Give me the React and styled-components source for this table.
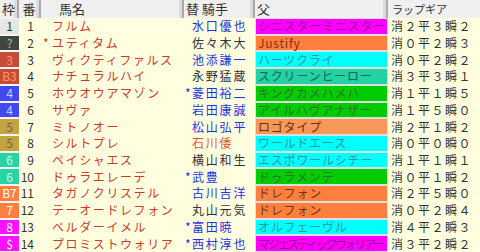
import React from 'react';
import styled, { createGlobalStyle } from 'styled-components';

const GlobalStyle = createGlobalStyle`
  html, body {
    margin: 0;
    padding: 0;
    background: #ffffe0;
  }
  body {
    font-family: "Noto Sans CJK JP", "Noto Sans", sans-serif;
    line-height: 14px;
  }
`;

const WAKU = {
  1: { bg: '#e6e6e6', fg: '#333333' },
  2: { bg: '#3e473e', fg: '#b8b8b8' },
  3: { bg: '#c84a38', fg: '#ff9a60' },
  4: { bg: '#4048f0', fg: '#c8d0ff' },
  5: { bg: '#c4a442', fg: '#6a6050' },
  6: { bg: '#28d4a4', fg: '#d0fff0' },
  7: { bg: '#ff7f3f', fg: '#ffffff' },
  8: { bg: '#ff10ff', fg: '#ffffff' },
};

const SIRE = {
  magenta: { bg: '#ff00ff', fg: '#a000a0' },
  orange: { bg: '#ff7f3f', fg: '#7a3010' },
  salmon: { bg: '#f89858', fg: '#6a3010' },
  cyan: { bg: '#00ffff', fg: '#2a9a9a' },
  teal: { bg: '#22d2a2', fg: '#106a50' },
  green: { bg: '#00cc00', fg: '#2a7a2a' },
};

const JOCKEY = {
  blue: '#2233dd',
  black: '#333333',
  red: '#e0582a',
};

const horses = [
  { waku: 1, label: '1', no: 1, name: 'フルム', jockey: '水口優也', jc: 'blue', sire: 'シニスターミニスター', sc: 'magenta', gear: '消２平３瞬２' },
  { waku: 2, label: '?', no: 2, mark: true, name: 'ユティタム', jockey: '佐々木大', jc: 'black', sire: 'Justify', sc: 'orange', gear: '消０平２瞬３' },
  { waku: 3, label: '3', no: 3, name: 'ヴィクティファルス', jockey: '池添謙一', jc: 'blue', sire: 'ハーツクライ', sc: 'cyan', gear: '消０平２瞬２' },
  { waku: 3, label: 'B3', no: 4, name: 'ナチュラルハイ', jockey: '永野猛蔵', jc: 'black', sire: 'スクリーンヒーロー', sc: 'teal', gear: '消３平３瞬１' },
  { waku: 4, label: '4', no: 5, name: 'ホウオウアマゾン', jockey: '菱田裕二', jmark: true, jc: 'blue', sire: 'キングカメハメハ', sc: 'green', gear: '消１平１瞬５' },
  { waku: 4, label: '4', no: 6, name: 'サヴァ', jockey: '岩田康誠', jc: 'blue', sire: 'アイルハヴアナザー', sc: 'green', gear: '消１平５瞬０' },
  { waku: 5, label: '5', no: 7, name: 'ミトノオー', jockey: '松山弘平', jc: 'blue', sire: 'ロゴタイプ', sc: 'salmon', gear: '消２平１瞬２' },
  { waku: 5, label: '5', no: 8, name: 'シルトプレ', jockey: '石川倭', jc: 'red', sire: 'ワールドエース', sc: 'cyan', gear: '消０平０瞬０' },
  { waku: 6, label: '6', no: 9, name: 'ペイシャエス', jockey: '横山和生', jc: 'black', sire: 'エスポワールシチー', sc: 'cyan', gear: '消１平１瞬１' },
  { waku: 6, label: '6', no: 10, name: 'ドゥラエレーデ', jockey: '武豊', jmark: true, jc: 'blue', sire: 'ドゥラメンテ', sc: 'green', gear: '消０平１瞬２' },
  { waku: 7, label: 'B7', no: 11, name: 'タガノクリステル', jockey: '古川吉洋', jc: 'blue', sire: 'ドレフォン', sc: 'orange', gear: '消２平５瞬０' },
  { waku: 7, label: '7', no: 12, name: 'テーオードレフォン', jockey: '丸山元気', jc: 'black', sire: 'ドレフォン', sc: 'orange', gear: '消０平２瞬４' },
  { waku: 8, label: '8', no: 13, name: 'ベルダーイメル', jockey: '富田暁', jmark: true, jc: 'blue', sire: 'オルフェーヴル', sc: 'cyan', gear: '消４平２瞬３' },
  { waku: 8, label: '$', no: 14, name: 'プロミストウォリア', jockey: '西村淳也', jmark: true, jc: 'blue', sire: 'マジェスティックウォリアー', sc: 'magenta', gear: '消３平２瞬２', squeeze: true },
];

export default function App() {
  return (
    <>
      <GlobalStyle />
      <Table>
        <HeadCell align='center'>枠</HeadCell>
        <HeadCell align='center'>番</HeadCell>
        <HeadCell pad='18px'>馬名</HeadCell>
        <HeadCell pad='2px'>替 騎手</HeadCell>
        <HeadCell pad='2px'>父</HeadCell>
        <HeadCell pad='4px' small last>ラップギア</HeadCell>

        {horses.map(h => (
          <React.Fragment key={h.no}>
            <WakuCell>
              <WakuBox bg={WAKU[h.waku].bg} fg={WAKU[h.waku].fg}>{h.label}</WakuBox>
            </WakuCell>
            <NumCell>{h.no}</NumCell>
            <NameCell>
              <Mark w='9px' color='#c83c28'>{h.mark ? '*' : ''}</Mark>
              {h.name}
            </NameCell>
            <JockeyCell color={JOCKEY[h.jc]}>
              <Mark w='7px' color={JOCKEY.blue}>{h.jmark ? '*' : ''}</Mark>
              {h.jockey}
            </JockeyCell>
            <SireCell>
              <SireBox bg={SIRE[h.sc].bg} fg={SIRE[h.sc].fg} squeeze={h.squeeze}>
                {h.sire}
              </SireBox>
            </SireCell>
            <GearCell>{h.gear}</GearCell>
          </React.Fragment>
        ))}
      </Table>
    </>
  );
}

const Table = styled.div`
  display: grid;
  grid-template-columns: 19px 22px 143px 71px 133px 1fr;
  grid-template-rows: 18px repeat(14, minmax(0, 1fr));
  width: 480px;
  height: 252px;
  background: #ffffe0;
  overflow: hidden;
`;

const HeadCell = styled.div`
  display: flex;
  align-items: center;
  justify-content: ${({ align }) => (align === 'center' ? 'center' : 'flex-start')};
  padding-left: ${({ pad }) => pad || '0'};
  background: #f0f0f0;
  color: #333;
  font-size: ${({ small }) => (small ? '11px' : '13px')};
  white-space: nowrap;
  border-right: ${({ last }) => (last ? 'none' : '2px solid #a9a9a9')};
  box-shadow: ${({ last }) => (last ? 'none' : 'inset -3px 0 0 #dcdcdc')};
`;

const WakuCell = styled.div`
  display: flex;
  min-height: 0;
  padding: 1px 0;
  background: #f4f4f4;
`;

const WakuBox = styled.div`
  flex: 1;
  display: flex;
  align-items: center;
  justify-content: center;
  background: ${({ bg }) => bg};
  color: ${({ fg }) => fg};
  font-size: 12px;
  line-height: 14px;
`;

const NumCell = styled.div`
  display: flex;
  align-items: center;
  justify-content: flex-end;
  min-height: 0;
  padding-right: 7px;
  color: #333;
  font-size: 12px;
`;

const NameCell = styled.div`
  display: flex;
  align-items: center;
  min-height: 0;
  padding-left: 2px;
  color: #c83c28;
  font-size: 12px;
  letter-spacing: 1.6px;
  white-space: nowrap;
`;

const Mark = styled.span`
  display: inline-block;
  width: ${({ w }) => w};
  flex: none;
  color: ${({ color }) => color};
  letter-spacing: 0;
`;

const JockeyCell = styled.div`
  display: flex;
  align-items: center;
  min-height: 0;
  padding-left: 1px;
  color: ${({ color }) => color};
  font-size: 12px;
  letter-spacing: 1.8px;
  white-space: nowrap;
`;

const SireCell = styled.div`
  display: flex;
  min-height: 0;
  padding: 1px;
  background: #dedede;
`;

const SireBox = styled.div`
  flex: 1;
  display: flex;
  align-items: center;
  min-width: 0;
  padding-left: 2px;
  background: ${({ bg }) => bg};
  color: ${({ fg }) => fg};
  font-size: 12px;
  line-height: 14px;
  letter-spacing: ${({ squeeze }) => (squeeze ? '-2.3px' : '0.8px')};
  white-space: nowrap;
`;

const GearCell = styled.div`
  display: flex;
  align-items: center;
  min-height: 0;
  padding-left: 3px;
  color: #333;
  font-size: 12px;
  letter-spacing: 1.5px;
  white-space: nowrap;
`;
